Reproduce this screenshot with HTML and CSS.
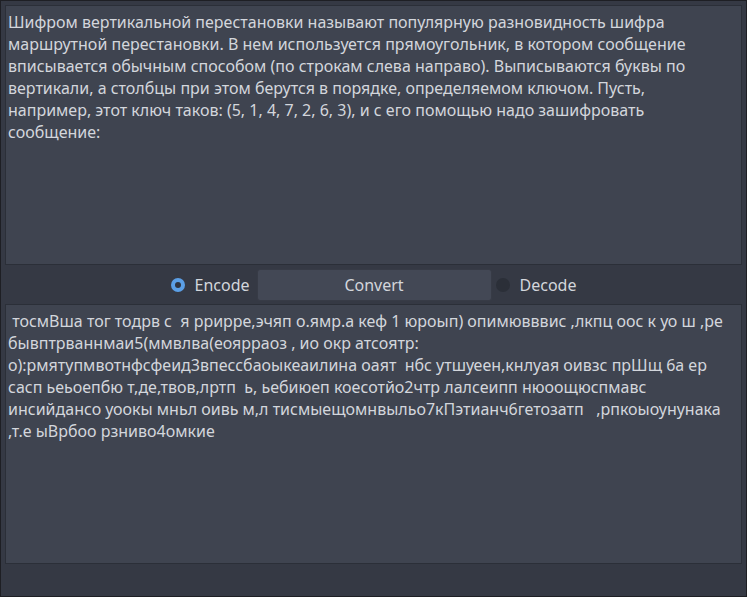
FILE: index.html
```html
<!DOCTYPE html>
<html lang="ru">
<head>
<meta charset="utf-8">
<title>Cipher</title>
<link rel="stylesheet" href="styles.css">
</head>
<body>
<div class="window">
  <div class="panel text-in">Шифром вертикальной перестановки называют популярную разновидность шифра
маршрутной перестановки. В нем используется прямоугольник, в котором сообщение
вписывается обычным способом (по строкам слева направо). Выписываются буквы по
вертикали, а столбцы при этом берутся в порядке, определяемом ключом. Пусть,
например, этот ключ таков: (5, 1, 4, 7, 2, 6, 3), и с его помощью надо зашифровать
сообщение:</div>
  <div class="controls">
    <label class="radio"><span class="dot checked"></span><span class="label">Encode</span></label>
    <button class="convert">Convert</button>
    <label class="radio"><span class="dot"></span><span class="label">Decode</span></label>
  </div>
  <div class="panel text-out"> тосмВша тог тодрв с  я ррирре,эчяп о.ямр.а кеф 1 юроып) опимювввис ,лкпц оос к уо ш ,ре
бывптрваннмаи5(ммвлва(еоярраоз , ио окр атсоятр:
о):рмятупмвотнфсфеид3впессбаоыкеаилина оаят  нбс утшуеен,кнлуая оивзс прШщ 6а ер
сасп ьеьоепбю т,де,твов,лртп  ь, ьебиюеп коесотйо2чтр лалсеипп нюоощюспмавс
инсийдансо уоокы мньл оивь м,л тисмыещомнвыльо7кПэтианч6гетозатп   ,рпкоыоунунака
,т.е ыВрбоо рзниво4омкие</div>
</div>
</body>
</html>
```

FILE: styles.css
```css
html, body {
  margin: 0;
  padding: 0;
  background: #353944;
}

.window {
  box-sizing: border-box;
  width: 747px;
  height: 597px;
  border: 1px solid #1e1f24;
  background: #353944;
  padding: 4px;
  display: flex;
  flex-direction: column;
  gap: 4px;
  font-family: "Noto Sans", "DejaVu Sans", sans-serif;
  font-size: 16px;
  line-height: 22px;
  color: #d3d6dc;
}

.panel {
  box-sizing: border-box;
  height: 260px;
  flex: 0 0 260px;
  background: #3f4450;
  border: 1px solid #2b2f38;
  padding: 5px 0 5px 2px;
  white-space: pre;
  overflow: hidden;
}

.controls {
  height: 31px;
  flex: 0 0 31px;
  display: flex;
  justify-content: center;
  align-items: center;
}

.radio {
  display: flex;
  align-items: center;
  height: 31px;
}

.radio .label {
  margin-left: 10px;
}

.radio:first-child .label {
  margin-right: 7px;
}

.radio:last-child {
  margin-left: 4px;
}

.dot {
  box-sizing: border-box;
  width: 14px;
  height: 14px;
  border-radius: 50%;
  background: #2b2f38;
  position: relative;
}

.dot.checked {
  background: #5b9fe6;
}

.dot.checked::after {
  content: "";
  position: absolute;
  left: 4px;
  top: 4px;
  width: 6px;
  height: 6px;
  border-radius: 50%;
  background: #2f3440;
}

.convert {
  box-sizing: border-box;
  width: 235px;
  height: 32px;
  margin: 0;
  background: #434855;
  border: 1px solid #373b46;
  border-radius: 3px;
  font-family: inherit;
  font-size: 16px;
  color: #d3d6dc;
  padding: 0;
}
```
